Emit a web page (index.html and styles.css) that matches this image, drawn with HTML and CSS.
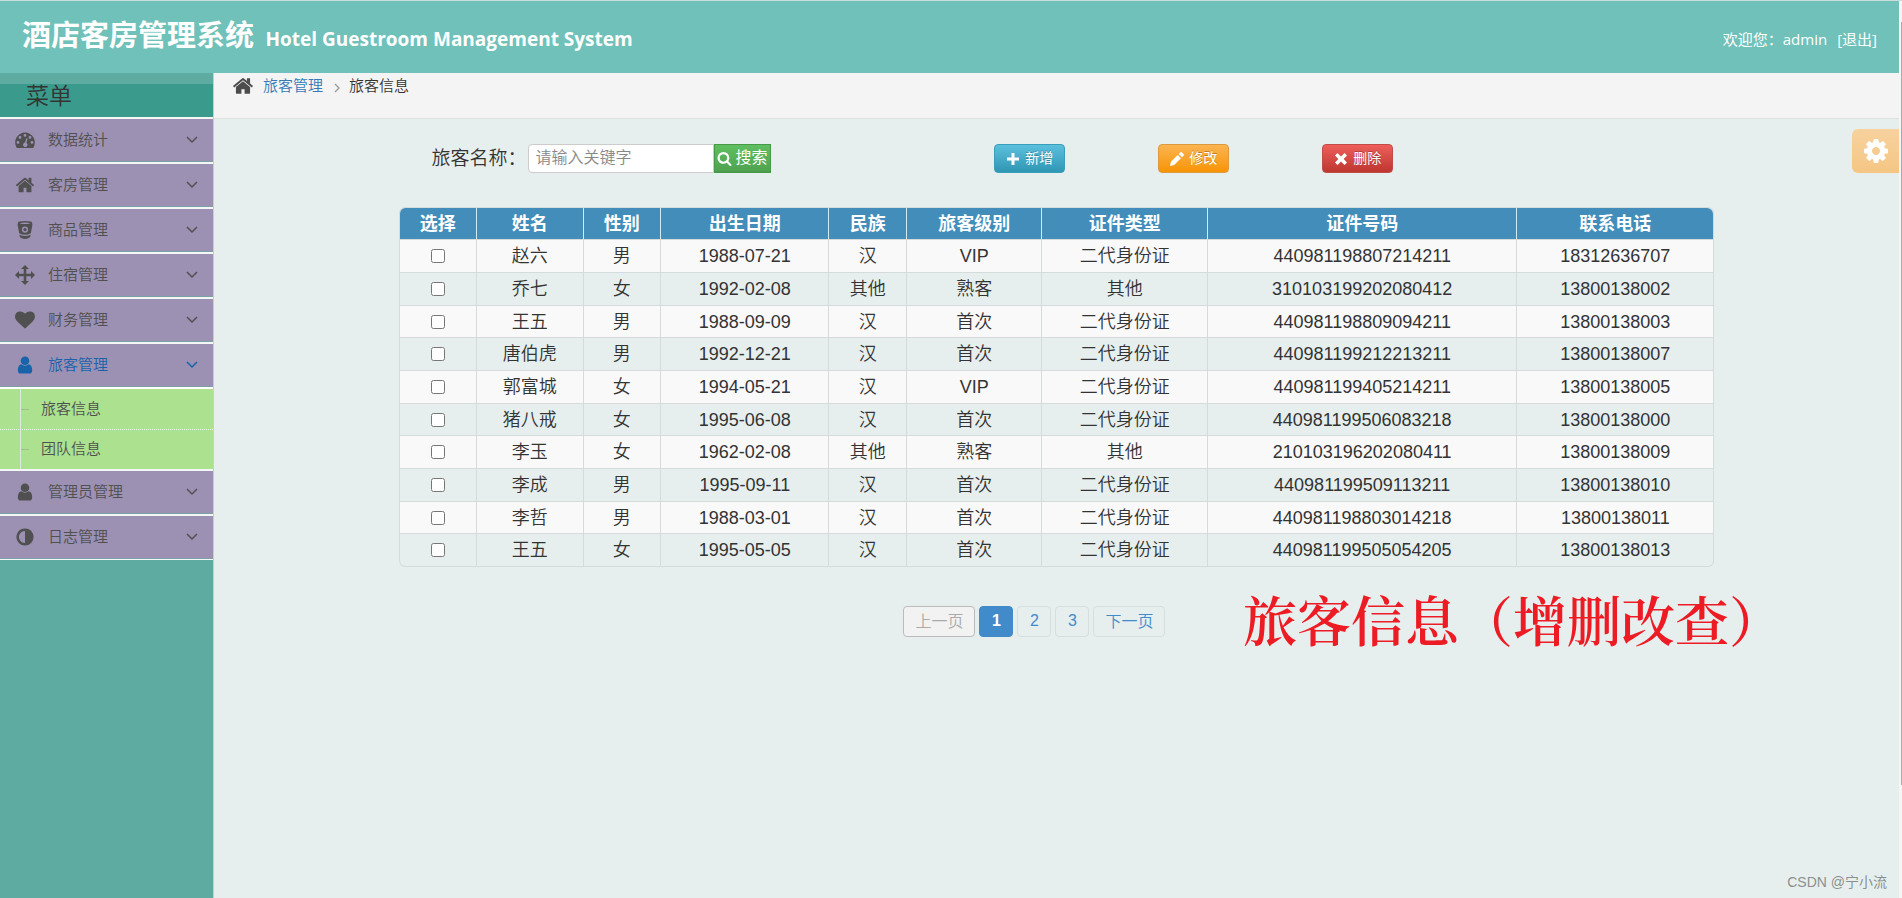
FILE: index.html
```html
<!DOCTYPE html>
<html lang="zh-CN">
<head>
<meta charset="utf-8">
<title>酒店客房管理系统</title>
<link rel="stylesheet" href="styles.css">
</head>
<body>
<svg class="sprite" aria-hidden="true">
  <symbol id="home" viewBox="0 0 1792 1792"><path d="M1472 992v480q0 26-19 45t-45 19h-384v-384h-256v384h-384q-26 0-45-19t-19-45v-480q0-1 .5-3t.5-3l575-474 575 474q1 2 1 6zm223-69l-62 74q-8 9-21 11h-3q-13 0-21-7l-692-577-692 577q-12 8-24 7-13-2-21-11l-62-74q-8-10-7-23.5t11-21.5l719-599q32-26 76-26t76 26l244 204v-195q0-14 9-23t23-9h192q14 0 23 9t9 23v408l219 182q10 8 11 21.5t-7 23.5z"/></symbol>
  <symbol id="user" viewBox="0 0 1792 1792"><path d="M1536 1399q0 109-62.500 187t-150.500 78h-854q-88 0-150.500-78t-62.500-187q0-85 8.500-160.500t31.500-152 58.500-131 94-89 134.500-34.500q131 128 313 128t313-128q76 0 134.500 34.500t94 89 58.500 131 31.500 152 8.500 160.500zm-256-887q0 159-112.500 271.500t-271.500 112.500-271.500-112.500-112.500-271.500 112.500-271.500 271.500-112.500 271.500 112.500 112.500 271.500z"/></symbol>
  <symbol id="heart" viewBox="0 0 1792 1792"><path d="M896 1664q-26 0-44-18l-624-602q-10-8-27.500-26t-55.500-65.500-68-97.500-53.500-121-23.500-138q0-220 127-344t351-124q62 0 126.500 21.500t120 58 95.500 68.500 76 68q36-36 76-68t95.500-68.500 120-58 126.500-21.500q224 0 351 124t127 344q0 221-229 450l-623 600q-18 18-44 18z"/></symbol>
  <symbol id="adjust" viewBox="0 0 1792 1792"><path d="M896 1440v-1088q-148 0-273 73t-198 198-73 273 73 273 198 198 273 73zm768-544q0 209-103 385.500t-279.500 279.500-385.500 103-385.500-103-279.500-279.500-103-385.500 103-385.500 279.500-279.500 385.500-103 385.500 103 279.500 279.500 103 385.500z"/></symbol>
  <symbol id="search" viewBox="0 0 1792 1792"><path d="M1216 832q0-185-131.500-316.500t-316.500-131.500-316.500 131.500-131.500 316.500 131.500 316.500 316.500 131.500 316.500-131.500 131.500-316.500zm512 832q0 52-38 90t-90 38q-54 0-90-38l-343-342q-179 124-399 124-143 0-273.500-55.500t-225-150-150-225-55.500-273.500 55.500-273.500 150-225 225-150 273.500-55.500 273.500 55.500 225 150 150 225 55.500 273.500q0 220-124 399l343 343q37 37 37 90z"/></symbol>
  <symbol id="cog" viewBox="0 0 1792 1792"><path d="M1152 896q0-106-75-181t-181-75-181 75-75 181 75 181 181 75 181-75 75-181zm512-109v222q0 12-8 23t-20 13l-185 28q-19 54-39 91 35 50 107 138 10 12 10 25t-9 23q-27 37-99 108t-94 71q-12 0-26-9l-138-108q-44 23-91 38-16 136-29 186-7 28-36 28h-222q-14 0-24.500-8.500t-11.500-21.500l-28-184q-49-16-90-37l-141 107q-10 9-25 9-14 0-25-11-126-114-165-168-7-10-7-23 0-12 8-23 15-21 51-66.500t54-70.500q-27-50-41-99l-183-27q-13-2-21-12.500t-8-23.500v-222q0-12 8-23t19-13l186-28q14-46 39-92-40-57-107-138-10-12-10-24 0-10 9-23 26-36 98.500-107.500t94.500-71.500q13 0 26 10l138 107q44-23 91-38 16-136 29-186 7-28 36-28h222q14 0 24.500 8.500t11.500 21.500l28 184q49 16 90 37l142-107q9-9 24-9 13 0 25 10 129 119 165 170 7 8 7 22 0 12-8 23-15 21-51 66.500t-54 70.500q26 50 41 98l183 28q13 2 21 12.500t8 23.500z"/></symbol>
  <symbol id="gauge" viewBox="0 0 20 20"><path fill-rule="evenodd" d="M10 2.500A10 10 0 0 0 1.500 17.500Q1.900 18 2.500 18h15q.6 0 1-.5A10 10 0 0 0 10 2.500ZM10 4a1.400 1.400 0 1 1 0 2.800 1.400 1.400 0 0 1 0-2.800ZM5 6a1.400 1.400 0 1 1 0 2.800A1.400 1.400 0 0 1 5 6ZM3 11a1.400 1.400 0 1 1 0 2.800A1.400 1.400 0 0 1 3 11ZM15 6a1.400 1.400 0 1 1 0 2.800A1.400 1.400 0 0 1 15 6ZM17 11a1.400 1.400 0 1 1 0 2.800 1.400 1.400 0 0 1 0-2.800ZM11.300 8.200l1.200.3-1.100 4.400a2.200 2.200 0 1 1-1.300-.3Z"/></symbol>
  <symbol id="bucket" viewBox="0 0 20 20"><path fill-rule="evenodd" d="M3 2.500Q3 1 10 1t7 1.500l.4 2.500-1.600 8.200Q10 16.200 4.200 13.200L2.600 5ZM4.500 3.200Q10 5 15.500 3.200 10 2 4.500 3.200ZM10 6.500a3.100 3.100 0 1 0 0 6.200 3.100 3.100 0 0 0 0-6.200ZM10 7.900a1.700 1.700 0 1 1 0 3.400 1.700 1.700 0 0 1 0-3.400ZM4.400 14.700q5.600 2.600 11.200 0l-.6 2.600q-2 1.700-5 1.700t-5-1.700Z"/></symbol>
  <symbol id="move" viewBox="0 0 20 20"><path d="M10 0l4 4h-2.700v4.700H16V6l4 4-4 4v-2.700h-4.700V16H14l-4 4-4-4h2.700v-4.700H4V14l-4-4 4-4v2.700h4.700V4H6Z"/></symbol>
  <symbol id="plus" viewBox="0 0 14 14"><path d="M5.500 1h3v4.500H13v3H8.500V13h-3V8.500H1v-3h4.500Z"/></symbol>
  <symbol id="pencil" viewBox="0 0 14 14"><path d="M0 14l.9-4.200 6.800-6.800 3.300 3.300-6.800 6.800ZM8.700 2l1.500-1.500q.9-.9 1.800 0l1.500 1.500q.9.900 0 1.800L12 5.300Z"/></symbol>
  <symbol id="times" viewBox="0 0 14 14"><path d="M3.500 1L7 4.400 10.500 1 13 3.500 9.600 7 13 10.500 10.500 13 7 9.600 3.500 13 1 10.500 4.400 7 1 3.500Z"/></symbol>
  <symbol id="down" viewBox="0 0 12 8"><path d="M1 1l5 5 5-5" fill="none" stroke="currentColor" stroke-width="1.500"/></symbol>
  <symbol id="right" viewBox="0 0 6 10"><path d="M1 1l4 4-4 4" fill="none" stroke="currentColor" stroke-width="1.300"/></symbol>
</svg>

<header class="topbar">
  <h1 class="brand">酒店客房管理系统 <small class="brand-en">Hotel Guestroom Management System</small></h1>
  <div class="account">欢迎您：<span>admin</span><a class="logout" href="#">[退出]</a></div>
</header>

<div class="shell">
  <nav class="sidebar">
    <h2 class="sidebar-title">菜单</h2>
    <ul class="menu">
      <li><a class="menu-item" href="#"><svg class="icon"><use href="#gauge"/></svg><span class="menu-text">数据统计</span><svg class="caret"><use href="#down"/></svg></a></li>
      <li><a class="menu-item" href="#"><svg class="icon"><use href="#home"/></svg><span class="menu-text">客房管理</span><svg class="caret"><use href="#down"/></svg></a></li>
      <li><a class="menu-item" href="#"><svg class="icon"><use href="#bucket"/></svg><span class="menu-text">商品管理</span><svg class="caret"><use href="#down"/></svg></a></li>
      <li><a class="menu-item" href="#"><svg class="icon"><use href="#move"/></svg><span class="menu-text">住宿管理</span><svg class="caret"><use href="#down"/></svg></a></li>
      <li><a class="menu-item" href="#"><svg class="icon"><use href="#heart"/></svg><span class="menu-text">财务管理</span><svg class="caret"><use href="#down"/></svg></a></li>
      <li><a class="menu-item open" href="#"><svg class="icon"><use href="#user"/></svg><span class="menu-text">旅客管理</span><svg class="caret"><use href="#down"/></svg></a>
        <ul class="submenu">
          <li><a class="submenu-item" href="#"><span class="menu-text">旅客信息</span></a></li>
          <li><a class="submenu-item" href="#"><span class="menu-text">团队信息</span></a></li>
        </ul>
      </li>
      <li><a class="menu-item" href="#"><svg class="icon"><use href="#user"/></svg><span class="menu-text">管理员管理</span><svg class="caret"><use href="#down"/></svg></a></li>
      <li><a class="menu-item" href="#"><svg class="icon"><use href="#adjust"/></svg><span class="menu-text">日志管理</span><svg class="caret"><use href="#down"/></svg></a></li>
    </ul>
  </nav>

  <main class="main">
    <div class="crumbs">
      <svg class="crumb-home"><use href="#home"/></svg>
      <a class="crumb-link" href="#">旅客管理</a>
      <svg class="crumb-sep"><use href="#right"/></svg>
      <span>旅客信息</span>
    </div>
    <button class="settings" type="button" aria-label="设置"><svg class="settings-icon"><use href="#cog"/></svg></button>

    <div class="content">
      <div class="toolbar">
        <form class="search">
          <label class="search-label" for="keyword">旅客名称：</label>
          <input class="search-input" id="keyword" type="text" placeholder="请输入关键字">
          <button class="search-btn" type="button"><svg class="search-icon"><use href="#search"/></svg>搜索</button>
        </form>
        <div class="actions">
          <button class="btn btn-add" type="button"><svg class="btn-icon"><use href="#plus"/></svg><span class="btn-text">新增</span></button>
          <button class="btn btn-edit" type="button"><svg class="btn-icon"><use href="#pencil"/></svg><span class="btn-text">修改</span></button>
          <button class="btn btn-del" type="button"><svg class="btn-icon"><use href="#times"/></svg><span class="btn-text">删除</span></button>
        </div>
      </div>

      <table class="guests">
        <colgroup><col class="c-sm"><col class="c-name"><col class="c-sm"><col class="c-date"><col class="c-sm"><col class="c-level"><col class="c-type"><col class="c-id"><col class="c-phone"></colgroup>
        <thead><tr><th>选择</th><th>姓名</th><th>性别</th><th>出生日期</th><th>民族</th><th>旅客级别</th><th>证件类型</th><th>证件号码</th><th>联系电话</th></tr></thead>
        <tbody>
          <tr><td><input class="pick" type="checkbox" aria-label="赵六"></td><td>赵六</td><td>男</td><td>1988-07-21</td><td>汉</td><td>VIP</td><td>二代身份证</td><td>440981198807214211</td><td>18312636707</td></tr>
          <tr><td><input class="pick" type="checkbox" aria-label="乔七"></td><td>乔七</td><td>女</td><td>1992-02-08</td><td>其他</td><td>熟客</td><td>其他</td><td>310103199202080412</td><td>13800138002</td></tr>
          <tr><td><input class="pick" type="checkbox" aria-label="王五"></td><td>王五</td><td>男</td><td>1988-09-09</td><td>汉</td><td>首次</td><td>二代身份证</td><td>440981198809094211</td><td>13800138003</td></tr>
          <tr><td><input class="pick" type="checkbox" aria-label="唐伯虎"></td><td>唐伯虎</td><td>男</td><td>1992-12-21</td><td>汉</td><td>首次</td><td>二代身份证</td><td>440981199212213211</td><td>13800138007</td></tr>
          <tr><td><input class="pick" type="checkbox" aria-label="郭富城"></td><td>郭富城</td><td>女</td><td>1994-05-21</td><td>汉</td><td>VIP</td><td>二代身份证</td><td>440981199405214211</td><td>13800138005</td></tr>
          <tr><td><input class="pick" type="checkbox" aria-label="猪八戒"></td><td>猪八戒</td><td>女</td><td>1995-06-08</td><td>汉</td><td>首次</td><td>二代身份证</td><td>440981199506083218</td><td>13800138000</td></tr>
          <tr><td><input class="pick" type="checkbox" aria-label="李玉"></td><td>李玉</td><td>女</td><td>1962-02-08</td><td>其他</td><td>熟客</td><td>其他</td><td>210103196202080411</td><td>13800138009</td></tr>
          <tr><td><input class="pick" type="checkbox" aria-label="李成"></td><td>李成</td><td>男</td><td>1995-09-11</td><td>汉</td><td>首次</td><td>二代身份证</td><td>440981199509113211</td><td>13800138010</td></tr>
          <tr><td><input class="pick" type="checkbox" aria-label="李哲"></td><td>李哲</td><td>男</td><td>1988-03-01</td><td>汉</td><td>首次</td><td>二代身份证</td><td>440981198803014218</td><td>13800138011</td></tr>
          <tr><td><input class="pick" type="checkbox" aria-label="王五"></td><td>王五</td><td>女</td><td>1995-05-05</td><td>汉</td><td>首次</td><td>二代身份证</td><td>440981199505054205</td><td>13800138013</td></tr>
        </tbody>
      </table>

      <nav class="pager" aria-label="分页">
        <button class="page page-text" type="button" disabled>上一页</button>
        <button class="page current" type="button">1</button>
        <button class="page" type="button">2</button>
        <button class="page" type="button">3</button>
        <button class="page page-text" type="button">下一页</button>
      </nav>
    </div>
    <p class="note">旅客信息（增删改查）</p>
    <p class="watermark">CSDN @宁小流</p>
  </main>
</div>
<div class="scroll-thumb"></div>
</body>
</html>
```

FILE: styles.css
```css
* { box-sizing: border-box; }

body {
  margin: 0;
  min-height: 100vh;
  display: flex;
  flex-direction: column;
  padding-right: 3px;
  border-top: 1px solid #c9dedb;
  background: #f4f6f6;
  color: #333;
  font-family: "Liberation Sans", "Noto Sans CJK SC", sans-serif;
  font-size: 15px;
}

svg { fill: currentColor; flex: none; }
a { color: inherit; text-decoration: none; }
ul { list-style: none; margin: 0; padding: 0; }
button, input { font-family: inherit; }
.sprite { display: none; }

.topbar {
  height: 72px;
  display: flex;
  align-items: center;
  justify-content: space-between;
  padding: 0 22px;
  background: #6fc1b9;
  color: #fff;
  font-family: "Open Sans", "Noto Sans CJK SC", sans-serif;
}
.brand { margin: 0; font-size: 29px; line-height: 40px; font-weight: 700; }
.brand-en { margin-left: 4px; font-size: 19px; }
.account { display: flex; align-items: center; padding-top: 4px; line-height: 20px; }
.logout { margin-left: 10px; }

.shell { flex: 1; display: flex; }

.sidebar {
  width: 214px;
  flex: none;
  background: #5eaba1;
  border-right: 1px solid #ccc;
  color: #505050;
  font-weight: 350;
}
.sidebar-title {
  margin: 11px 0 0;
  height: 33px;
  padding-left: 26px;
  background: #3a9b8d;
  color: #333;
  font-size: 23px;
  line-height: 24px;
  font-weight: 350;
}
.menu-item {
  display: flex;
  align-items: center;
  height: 45px;
  padding: 0 15px;
  gap: 13px;
  background: #9c91b3;
  border-top: 2px solid #f3f7f6;
  border-bottom: 1px solid #7ba0a5;
}
.menu-text { padding-bottom: 4px; }
.icon { width: 20px; height: 20px; }
.caret { width: 12px; height: 8px; margin-left: auto; }
.open { color: #1963aa; }
.submenu {
  border-top: 2px solid #fff;
  background: linear-gradient(#dce9dd, #dce9dd) 20px 0 / 1px 100% no-repeat #abe18f;
}
.submenu li + li .submenu-item { border-top: 1px dotted #f0f7e8; }
.submenu-item {
  display: flex;
  align-items: center;
  gap: 12px;
  height: 40px;
  padding-left: 21px;
  color: #505050;
}
.submenu-item::before { content: ""; width: 8px; border-top: 1px solid #9dc28f; }
.menu { border-bottom: 1px solid #f3f7f6; }

.main { flex: 1; position: relative; background: #e6efee; }

.crumbs {
  display: flex;
  align-items: flex-start;
  height: 46px;
  padding: 2px 18px;
  background: #f4f4f4;
  border-bottom: 1px solid #dde2e1;
  color: #333;
  font-weight: 350;
  line-height: 22px;
}
.crumb-home { width: 22px; height: 22px; margin-right: 9px; color: #4c4c4c; }
.crumb-link { color: #3579b5; }
.crumb-sep { width: 6px; height: 10px; margin: 8px 9px 0 11px; color: #999; }

.settings {
  position: absolute;
  top: 56px;
  right: 0;
  width: 47px;
  height: 44px;
  padding: 0;
  border: 0;
  border-radius: 6px 0 0 6px;
  background: linear-gradient(#f7d29e, #f5c684);
  color: #fff;
}
.settings-icon { width: 28px; height: 28px; display: block; margin: 0 auto; }

.content { width: 78.1%; margin: 0 auto; padding-top: 25px; }

.toolbar { display: flex; align-items: flex-start; padding-left: 33px; }
.search { display: flex; align-items: center; width: 43%; }
.search-label { padding-right: 1px; font-size: 19px; line-height: 29px; font-weight: 350; }
.search-input {
  flex: none;
  width: 186px;
  height: 29px;
  padding: 0 7px 2px;
  border: 1px solid #ccc;
  border-radius: 4px 0 0 4px;
  background: #fff;
  font-size: 16px;
  font-weight: 350;
}
.search-input::placeholder { color: #888; }
.search-btn {
  display: flex;
  align-items: center;
  gap: 4px;
  height: 29px;
  padding: 0 2px;
  border: 1px solid #489a48;
  border-bottom-width: 2px;
  background: linear-gradient(#5fbf60, #4fa350);
  color: #fff;
  font-size: 16px;
  line-height: 24px;
  white-space: nowrap;
}
.search-icon { width: 15px; height: 15px; }
.actions { display: flex; gap: 93px; margin-left: 11px; }
.btn {
  display: flex;
  align-items: center;
  justify-content: center;
  gap: 5px;
  width: 71px;
  height: 29px;
  padding: 0;
  border: 1px solid;
  border-radius: 4px;
  color: #fff;
  font-size: 14px;
  text-shadow: 0 -1px 0 rgba(0, 0, 0, .25);
}
.btn-text { padding-bottom: 4px; }
.btn-icon { width: 14px; height: 14px; }
.btn-add { background: linear-gradient(#5bc0de, #2f96b4); border-color: #3a9dba; }
.btn-edit { background: linear-gradient(#fbb450, #f89406); border-color: #dd9a3c; }
.btn-del { background: linear-gradient(#ee5f5b, #bd362f); border-color: #c14c47; }

.guests {
  width: 100%;
  margin-top: 34px;
  table-layout: fixed;
  border-collapse: separate;
  border-spacing: 0;
  border: solid #d5dbda;
  border-width: 1px 1px 1px 0;
  border-radius: 6px;
  font-size: 18px;
  line-height: 24px;
  text-align: center;
}
.c-sm { width: 5.9%; }
.c-name { width: 8.1%; }
.c-date { width: 12.8%; }
.c-level { width: 10.3%; }
.c-type { width: 12.6%; }
.c-id { width: 23.5%; }
.c-phone { width: 15%; }
.guests th {
  height: 31px;
  padding: 0;
  border-left: 1px solid #d8e8f0;
  background: #428dba;
  color: #fff;
}
.guests th:first-child { border-top-left-radius: 6px; border-left-color: #d5dbda; }
.guests th:last-child { border-top-right-radius: 6px; }
.guests td {
  height: 33px;
  padding: 0;
  border-top: 1px solid #d5dbda;
  border-left: 1px solid #d5dbda;
  font-weight: 350;
}
.guests tr:nth-child(3n) td { height: 32px; }
.guests tbody tr:nth-child(odd) { background: #f9f9f9; }
.guests tr:last-child td:first-child { border-bottom-left-radius: 6px; }
.pick { width: 14px; height: 14px; margin: 0 0 2px; vertical-align: middle; }

.pager { display: flex; justify-content: center; gap: 4px; margin-top: 39px; padding-right: 44px; }
.page {
  width: 34px;
  height: 31px;
  padding: 0 0 2px;
  border: 1px solid #d6dfdd;
  border-radius: 4px;
  background: transparent;
  color: #428bca;
  font-size: 16px;
}
.page-text { width: 72px; padding-bottom: 4px; font-weight: 350; }
.page:disabled { background: #f2f2f2; border-color: #bbb; color: #aaa; }
.current { background: #428bca; border-color: #428bca; color: #fff; font-weight: 700; }

.note {
  position: absolute;
  top: 506px;
  right: 116px;
  margin: 0;
  color: #ed1c24;
  font-family: "Noto Serif CJK SC", "Noto Sans CJK SC", serif;
  font-size: 54px;
  font-weight: 600;
  line-height: 80px;
  white-space: nowrap;
}
.watermark {
  position: absolute;
  right: 12px;
  bottom: 6px;
  margin: 0;
  color: #8b8f8f;
  font-size: 14px;
  line-height: 20px;
}
.scroll-thumb { position: absolute; top: 22px; right: 0; width: 1px; height: 85vh; background: #aaa; }
```
